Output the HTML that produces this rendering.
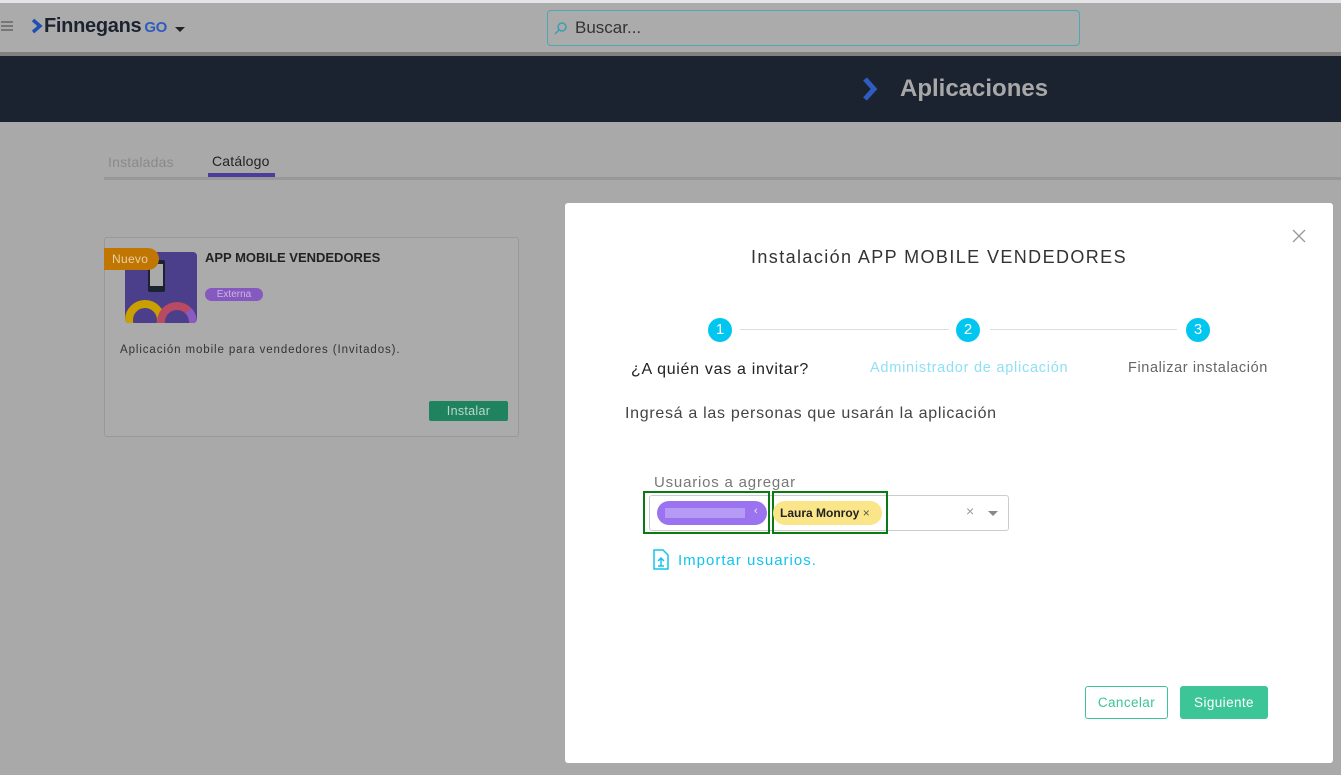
<!DOCTYPE html>
<html><head><meta charset="utf-8">
<style>
*{box-sizing:border-box;margin:0;padding:0}
body{width:1341px;height:775px;overflow:hidden;background:#a9a9a9;font-family:"Liberation Sans",sans-serif;position:relative}
.abs{position:absolute}
</style></head><body>
<div class="abs" style="left:0;top:0;width:1341px;height:3px;background:#e4e4e8"></div>
<div class="abs" style="left:0;top:3px;width:1341px;height:50px;background:#ababab"></div>
<div class="abs" style="left:0;top:52px;width:1341px;height:4px;background:#808080"></div>
<div class="abs" style="left:1px;top:21px;width:12px;height:2px;background:#777;box-shadow:0 4px 0 #777,0 8px 0 #777"></div>
<svg class="abs" style="left:31px;top:18px" width="12" height="16" viewBox="0 0 12 16"><path d="M2 2 L9 8 L2 14" stroke="#1f4fb0" stroke-width="3.5" fill="none"/></svg>
<div class="abs" style="left:44px;top:15px;font-size:20px;font-weight:bold;color:#1b2330;letter-spacing:-0.3px">Finnegans<span style="color:#2f5cc0;font-size:15px;margin-left:3px">GO</span></div>
<div class="abs" style="left:175px;top:27px;border-left:5px solid transparent;border-right:5px solid transparent;border-top:5px solid #222"></div>
<div class="abs" style="left:547px;top:10px;width:533px;height:36px;border:1px solid #4aa9b5;border-radius:4px;background:#ababab"></div>
<svg class="abs" style="left:554px;top:21px" width="14" height="14"><circle cx="8" cy="6" r="4" stroke="#3c9fb0" stroke-width="1.5" fill="none"/><path d="M5 9 L1 13" stroke="#3c9fb0" stroke-width="1.5"/></svg>
<div class="abs" style="left:575px;top:18px;font-size:17px;color:#333">Buscar...</div>
<div class="abs" style="left:0;top:56px;width:1341px;height:66px;background:#1b2330"></div>
<svg class="abs" style="left:860px;top:76px" width="20" height="26"><path d="M5 3 L14 13 L5 23" stroke="#2f5cc0" stroke-width="5" fill="none"/></svg>
<div class="abs" style="left:900px;top:75px;font-size:24px;font-weight:bold;color:#a8a8a8">Aplicaciones</div>
<div class="abs" style="left:108px;top:154px;font-size:14px;color:#8a8a8a;letter-spacing:0.2px">Instaladas</div>
<div class="abs" style="left:212px;top:153px;font-size:14px;color:#222;letter-spacing:0.2px">Catálogo</div>
<div class="abs" style="left:104px;top:177px;width:1237px;height:3px;background:#989898"></div>
<div class="abs" style="left:208px;top:173px;width:67px;height:4px;background:#4b3d9a"></div>
<div class="abs" style="left:104px;top:237px;width:415px;height:200px;border:1px solid #999;border-radius:3px;background:#ababab"></div>
<div class="abs" style="left:125px;top:252px;width:72px;height:71px;background:#4b3f8c;border-radius:4px;overflow:hidden">
<div class="abs" style="left:23px;top:8px;width:17px;height:32px;background:#1b2330;border-radius:2px"><div style="margin:4px 2px;height:22px;background:#aaa"></div></div>
<div class="abs" style="left:0;top:48px;width:40px;height:40px;border:8px solid #c9a000;border-radius:50%"></div>
<div class="abs" style="left:32px;top:50px;width:40px;height:40px;border:8px solid #b84a63;border-right-color:#8a5ac0;border-radius:50%"></div>
</div>
<div class="abs" style="left:104px;top:248px;width:55px;height:22px;background:#c07600;border-radius:0 11px 11px 0;color:#e8d0a8;font-size:12px;line-height:22px;padding-left:8px;letter-spacing:0.3px">Nuevo</div>
<div class="abs" style="left:205px;top:250px;font-size:13px;font-weight:bold;color:#222">APP MOBILE VENDEDORES</div>
<div class="abs" style="left:205px;top:288px;width:58px;height:13px;background:#8659c0;border-radius:7px;color:#c8b8e0;font-size:10px;line-height:13px;text-align:center">Externa</div>
<div class="abs" style="left:120px;top:344px;font-size:11.5px;color:#333;letter-spacing:0.9px">Aplicación mobile para vendedores (Invitados).</div>
<div class="abs" style="left:429px;top:401px;width:79px;height:20px;background:#20835f;border-radius:2px;color:#b8d8c8;font-size:12.5px;line-height:20px;text-align:center;letter-spacing:0.3px">Instalar</div>

<div class="abs" style="left:565px;top:203px;width:768px;height:560px;background:#fff;border-radius:3px"></div>
<svg class="abs" style="left:1292px;top:229px" width="14" height="14"><path d="M1 1L13 13M13 1L1 13" stroke="#999" stroke-width="1.3"/></svg>
<div class="abs" style="left:565px;top:247px;width:748px;text-align:center;font-size:18px;color:#333;letter-spacing:1.4px">Instalación APP MOBILE VENDEDORES</div>
<div class="abs" style="left:740px;top:329px;width:209px;height:1px;background:#ddd"></div>
<div class="abs" style="left:990px;top:329px;width:187px;height:1px;background:#ddd"></div>
<div class="abs" style="left:708px;top:318px;width:24px;height:24px;border-radius:50%;background:#00c6f0;color:#fff;text-align:center;line-height:24px;font-size:15px">1</div>
<div class="abs" style="left:956px;top:318px;width:24px;height:24px;border-radius:50%;background:#00c6f0;color:#fff;text-align:center;line-height:24px;font-size:15px">2</div>
<div class="abs" style="left:1186px;top:318px;width:24px;height:24px;border-radius:50%;background:#00c6f0;color:#fff;text-align:center;line-height:24px;font-size:15px">3</div>
<div class="abs" style="left:631px;top:361px;font-size:16px;color:#222;letter-spacing:0.7px">¿A quién vas a invitar?</div>
<div class="abs" style="left:870px;top:360px;font-size:14.5px;color:#8fe0f5;letter-spacing:0.75px">Administrador de aplicación</div>
<div class="abs" style="left:1128px;top:360px;font-size:14.5px;color:#666;letter-spacing:0.6px">Finalizar instalación</div>
<div class="abs" style="left:625px;top:405px;font-size:16px;color:#444;letter-spacing:0.7px">Ingresá a las personas que usarán la aplicación</div>
<div class="abs" style="left:654px;top:474px;font-size:15px;color:#777;letter-spacing:0.8px">Usuarios a agregar</div>
<div class="abs" style="left:649px;top:495px;width:360px;height:36px;border:1px solid #ccc;border-radius:3px"></div>
<div class="abs" style="left:643px;top:491px;width:127px;height:43px;border:2px solid #0a7a12"></div>
<div class="abs" style="left:772px;top:491px;width:116px;height:43px;border:2px solid #0a7a12"></div>
<div class="abs" style="left:657px;top:501px;width:110px;height:24px;border-radius:12px;background:#9b73f0"></div>
<div class="abs" style="left:665px;top:508px;width:80px;height:10px;background:#b9a0f5;opacity:.9"></div>
<div class="abs" style="left:754px;top:505px;font-size:11px;color:#eee">‹</div>
<div class="abs" style="left:773px;top:501px;width:109px;height:24px;border-radius:12px;background:#fae688;font-size:12px;font-weight:bold;color:#222;line-height:24px;padding-left:7px">Laura Monroy <span style="font-weight:normal;color:#555">×</span></div>
<div class="abs" style="left:966px;top:503px;font-size:14px;color:#999">×</div>
<div class="abs" style="left:988px;top:511px;border-left:5px solid transparent;border-right:5px solid transparent;border-top:5px solid #888"></div>
<svg class="abs" style="left:653px;top:549px" width="16" height="21"><path d="M1 1H10L15 6V20H1Z" stroke="#10c4ee" stroke-width="1.5" fill="none"/><path d="M8 17V9M5 12L8 9L11 12M5 17H11" stroke="#10c4ee" stroke-width="1.5" fill="none"/></svg>
<div class="abs" style="left:678px;top:552px;font-size:15px;color:#10c4ee;letter-spacing:1px">Importar usuarios.</div>
<div class="abs" style="left:1085px;top:686px;width:83px;height:33px;border:1px solid #3cc596;border-radius:3px;color:#3cc596;font-size:13.5px;text-align:center;line-height:31px;letter-spacing:0.4px">Cancelar</div>
<div class="abs" style="left:1180px;top:686px;width:88px;height:33px;background:#3cc596;border-radius:3px;color:#fff;font-size:13.5px;text-align:center;line-height:33px;letter-spacing:0.4px">Siguiente</div>
</body></html>
